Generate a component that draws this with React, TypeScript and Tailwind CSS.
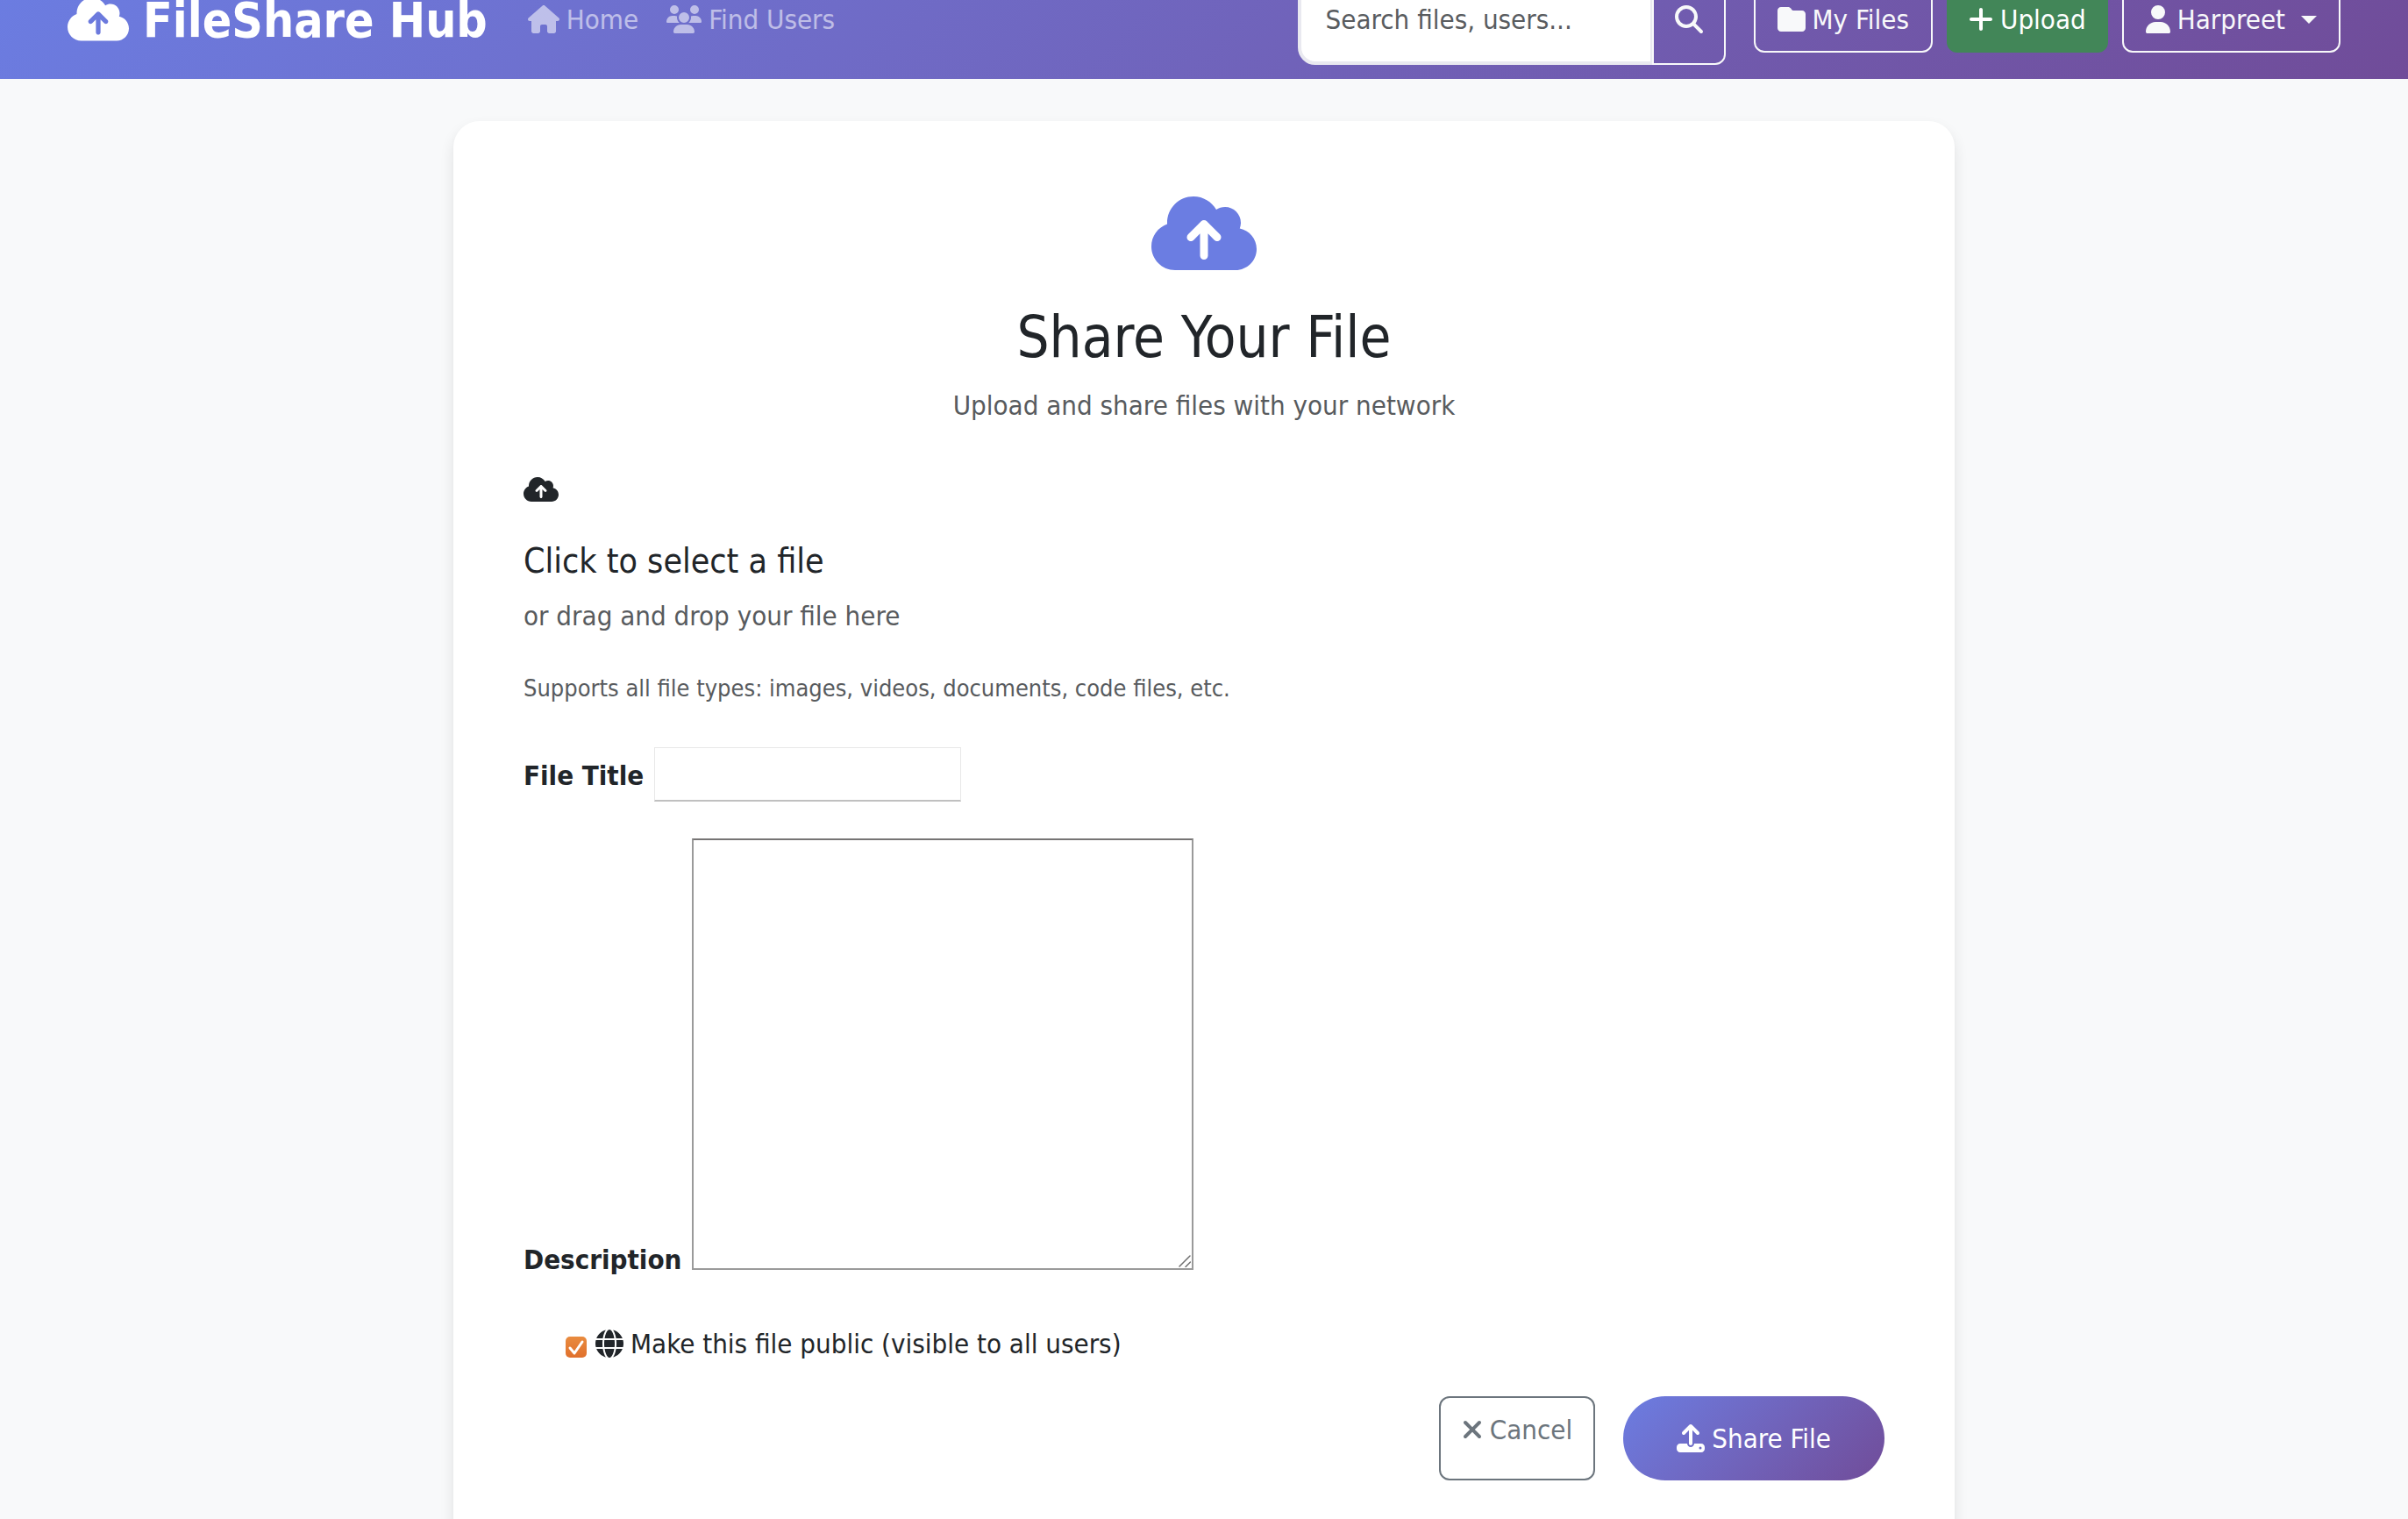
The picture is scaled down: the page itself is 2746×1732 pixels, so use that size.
import { useState } from "react";
import {
  FaCloudArrowUp,
  FaFolder,
  FaGlobe,
  FaHouse,
  FaMagnifyingGlass,
  FaPlus,
  FaUpload,
  FaUser,
  FaUsers,
  FaXmark,
} from "react-icons/fa6";

function Header() {
  return (
    <header className="-mt-[46px] h-[136px] bg-linear-135 from-[#6b7de2] to-[#704c99]">
      <div className="mx-auto flex h-full max-w-[2640px] items-center px-6">
        <a href="#" className="flex items-center gap-4 text-[55px] leading-[84px] font-bold text-white">
          <FaCloudArrowUp className="h-14 w-[70px]" />
          <span className="pt-0.5">FileShare Hub</span>
        </a>
        <nav className="ml-[46px] flex items-center gap-8 text-white/55">
          <a href="#" className="flex items-center gap-2">
            <FaHouse className="h-8 w-9" />
            Home
          </a>
          <a href="#" className="flex items-center gap-2">
            <FaUsers className="h-8 w-10" />
            Find Users
          </a>
        </nav>
        <form className="ml-auto flex" onSubmit={(e) => e.preventDefault()}>
          <input
            type="search"
            aria-label="Search files, users"
            placeholder="Search files, users..."
            className="h-[104px] w-[406px] rounded-l-[20px] border-4 border-[#e9e9f0] bg-white px-7 text-[#212529] outline-none placeholder:text-[#595c5f]"
          />
          <button
            type="submit"
            aria-label="Search"
            className="-ml-0.5 flex items-center rounded-r-xl border-2 border-[#f8f9fa] px-6 text-[#f8f9fa]"
          >
            <FaMagnifyingGlass className="size-8" />
          </button>
        </form>
        <div className="ml-8 flex gap-4 text-[#f8f9fa]">
          <a href="#" className="flex h-[76px] items-center gap-2 rounded-xl border-2 border-[#f8f9fa] px-[25px]">
            <FaFolder className="size-8" />
            My Files
          </a>
          <a href="#" className="flex h-[76px] items-center gap-2 rounded-xl bg-[#428658] px-[25px] text-white">
            <FaPlus className="h-8 w-7" />
            Upload
          </a>
          <button type="button" className="flex h-[76px] items-center gap-2 rounded-xl border-2 border-[#f8f9fa] px-[25px]">
            <FaUser className="h-8 w-7" />
            Harpreet
            <svg viewBox="0 0 18 9" className="ml-2.5 h-[9px] w-[18px]" aria-hidden="true">
              <path d="M0 0h18L9 9z" fill="currentColor" />
            </svg>
          </button>
        </div>
      </div>
    </header>
  );
}

function UploadCard() {
  const [isPublic, setIsPublic] = useState(true);
  return (
    <form
      className="rounded-[30px] bg-white p-20 shadow-[0_8px_16px_rgba(0,0,0,0.1)]"
      onSubmit={(e) => e.preventDefault()}
    >
      <div className="flex flex-col items-center text-center">
        <FaCloudArrowUp className="h-24 w-[120px] text-[#6b7de2]" />
        <h1 className="mt-8 text-[65px] leading-[78px]">Share Your File</h1>
        <p className="mt-3.5 text-[#585b5e]">Upload and share files with your network</p>
      </div>

      <div className="mt-[50px]">
        <div className="flex h-11 items-center">
          <FaCloudArrowUp className="h-8 w-10" />
        </div>
        <h2 className="mt-9 text-[39px] leading-[48px]">Click to select a file</h2>
        <p className="mt-3.5 text-[#585b5e]">or drag and drop your file here</p>
        <p className="mt-[38px] text-[27px] leading-[42px] text-[#585b5e]">
          Supports all file types: images, videos, documents, code files, etc.
        </p>
      </div>

      <div className="mt-[46px] flex items-center gap-3">
        <label htmlFor="title" className="pt-0.5 font-bold">
          File Title
        </label>
        <input
          id="title"
          type="text"
          className="h-[62px] w-[350px] border border-[#e8e8e8] border-b-2 border-b-[#c0c0c0] bg-white px-2 outline-none"
        />
      </div>

      <div className="mt-[42px] flex items-end gap-3">
        <label htmlFor="description" className="-mb-3 font-bold">
          Description
        </label>
        <div className="relative">
          <textarea
            id="description"
            className="block h-[492px] w-[572px] resize-none border-2 border-[#9a9a9a] border-t-[#767474] bg-white p-2 outline-none"
          />
          <svg viewBox="0 0 14 14" className="pointer-events-none absolute right-[3px] bottom-[3px] size-3.5" aria-hidden="true">
            <path d="M1 13 13 1M8 13.500l5.500-5.500" stroke="#6f6f6f" strokeWidth="1.500" strokeLinecap="round" fill="none" />
          </svg>
        </div>
      </div>

      <label className="mt-[60px] ml-12 flex w-fit items-center">
        <span className="mt-2 grid size-6 *:col-start-1 *:row-start-1">
          <input
            type="checkbox"
            checked={isPublic}
            onChange={(e) => setIsPublic(e.target.checked)}
            className="size-6 appearance-none rounded-[5px] border border-[#b0b0b0] checked:border-transparent checked:bg-[#e0702c] checked:bg-linear-to-b checked:from-[#e98b3f] checked:to-[#e0702c] checked:bg-origin-border"
          />
          {isPublic && (
            <svg viewBox="0 0 24 24" className="pointer-events-none size-6" aria-hidden="true">
              <path d="M5 13l5 6 9-13" fill="none" stroke="#fff" strokeWidth="3" strokeLinecap="round" strokeLinejoin="round" />
            </svg>
          )}
        </span>
        <FaGlobe className="mr-2 ml-2.5 size-8" />
        Make this file public (visible to all users)
      </label>

      <div className="mt-9 flex justify-end gap-8">
        <button
          type="button"
          className="flex items-start gap-2 rounded-xl border-2 border-[#6c757d] px-6 pt-3 text-[#6c757d]"
        >
          <FaXmark className="mt-2 h-8 w-6" />
          Cancel
        </button>
        <button
          type="submit"
          className="flex h-24 items-center gap-2 rounded-full bg-linear-135 from-[#6b7de2] to-[#704c99] px-[61px] text-white"
        >
          <FaUpload className="size-8" />
          Share File
        </button>
      </div>
    </form>
  );
}

export default function App() {
  return (
    <div className="min-h-screen bg-[#f8f9fa] font-['DejaVu_Sans_Condensed','DejaVu_Sans',sans-serif] text-[31px] leading-[48px] text-[#212529]">
      <Header />
      <main className="mx-auto max-w-[1760px] px-6 py-12">
        <UploadCard />
      </main>
    </div>
  );
}
